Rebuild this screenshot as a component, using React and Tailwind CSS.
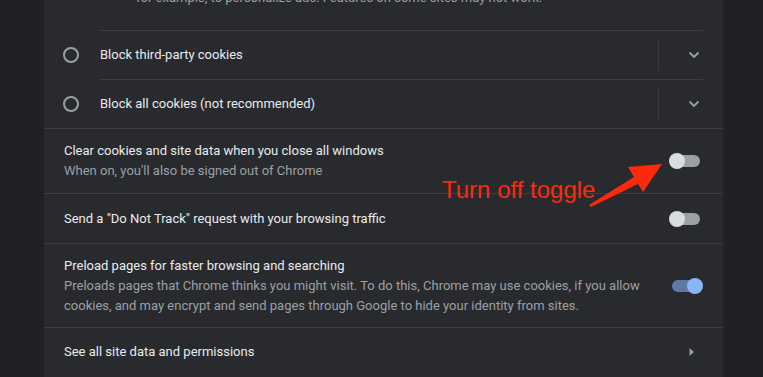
import React from "react";

const Chevron = () => (
  <svg width="12" height="8" viewBox="0 0 12 8" className="block">
    <path d="M1.5 1.5 L6 6 L10.5 1.5" fill="none" stroke="#9aa0a6" strokeWidth="1.8" />
  </svg>
);

const Radio = () => (
  <div className="w-[16px] h-[16px] rounded-full border-2 border-[#9aa0a6] shrink-0" />
);

const Toggle = ({ on }) =>
  on ? (
    <div className="relative w-[34px] h-[16px] shrink-0">
      <div className="absolute left-[3px] top-[2px] w-[28px] h-[12px] rounded-full bg-[#5c7aa8]" />
      <div className="absolute right-0 top-0 w-[16px] h-[16px] rounded-full bg-[#8ab4f8]" />
    </div>
  ) : (
    <div className="relative w-[34px] h-[16px] shrink-0">
      <div className="absolute left-[3px] top-[2px] w-[28px] h-[12px] rounded-full bg-[#9aa0a6]" />
      <div className="absolute left-0 top-0 w-[16px] h-[16px] rounded-full bg-[#dadce0]" />
    </div>
  );

const RadioRow = ({ label }) => (
  <div className="flex items-center h-[48px] pl-[19px] pr-[20px]">
    <Radio />
    <div className="flex-1 pl-[21px] text-[#e8eaed]">{label}</div>
    <div className="w-px h-[32px] bg-[#3c3d40]" />
    <div className="w-[44px] flex justify-end pr-[3px]">
      <Chevron />
    </div>
  </div>
);

export default function App() {
  return (
    <div
      className="relative w-[763px] h-[377px] overflow-hidden bg-[#202124] text-[13px] leading-[20px]"
      style={{ fontFamily: "Roboto, 'Liberation Sans', sans-serif" }}
    >
      <div className="ml-[44px] w-[679px] h-full bg-[#292a2d] flex flex-col">
        <div className="-mt-[12px] pl-[92px] pb-[22px] text-[#9aa0a6]">
          for example, to personalize ads. Features on some sites may not work.
        </div>
        <div className="ml-[56px] mr-[20px] h-px bg-[#3c3d40]" />
        <RadioRow label="Block third-party cookies" />
        <div className="ml-[56px] mr-[20px] h-px bg-[#3c3d40]" />
        <RadioRow label="Block all cookies (not recommended)" />
        <div className="h-px bg-[#3c3d40]" />

        <div className="flex items-center h-[64px] px-[20px]">
          <div className="flex-1">
            <div className="text-[#e8eaed]">Clear cookies and site data when you close all windows</div>
            <div className="text-[#9aa0a6]">When on, you'll also be signed out of Chrome</div>
          </div>
          <Toggle />
        </div>
        <div className="h-px bg-[#3c3d40]" />

        <div className="flex items-center h-[49px] px-[20px]">
          <div className="flex-1 text-[#e8eaed]">
            Send a "Do Not Track" request with your browsing traffic
          </div>
          <Toggle />
        </div>
        <div className="h-px bg-[#3c3d40]" />

        <div className="flex items-center h-[83px] px-[20px]">
          <div className="w-[585px]">
            <div className="text-[#e8eaed]">Preload pages for faster browsing and searching</div>
            <div className="text-[#9aa0a6]">
              Preloads pages that Chrome thinks you might visit. To do this, Chrome may use cookies, if you allow
              cookies, and may encrypt and send pages through Google to hide your identity from sites.
            </div>
          </div>
          <div className="flex-1 flex justify-end">
            <Toggle on />
          </div>
        </div>
        <div className="h-px bg-[#3c3d40]" />

        <div className="flex items-center h-[48px] px-[20px]">
          <div className="flex-1 text-[#e8eaed]">See all site data and permissions</div>
          <svg width="6" height="10" viewBox="0 0 6 10" className="mr-[8px]">
            <path d="M0.5 1 L5 5 L0.5 9 Z" fill="#9aa0a6" />
          </svg>
        </div>
      </div>

      <div
        className="absolute left-[442px] top-[176px] text-[24px] leading-[28px] text-[#fc2a0c]"
        style={{ fontFamily: "'Liberation Sans', Arial, sans-serif" }}
      >
        Turn off toggle
      </div>
      <svg className="absolute left-0 top-0" width="763" height="377" viewBox="0 0 763 377">
        <polygon
          points="589,205 634,177 628,167 662,164 643,192 638,184 591,207"
          fill="#fc2a0c"
        />
      </svg>
    </div>
  );
}
